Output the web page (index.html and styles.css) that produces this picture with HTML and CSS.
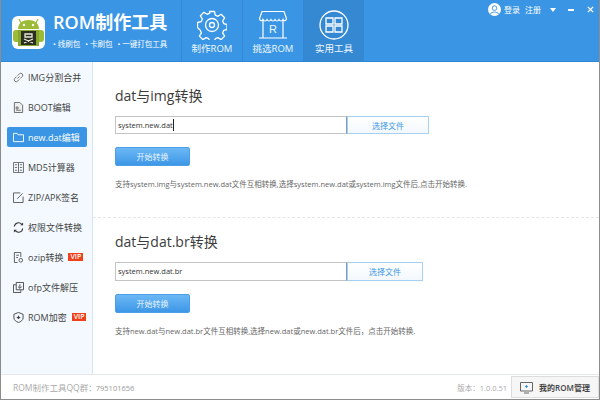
FILE: index.html
```html
<!DOCTYPE html>
<html lang="zh-CN">
<head>
    <meta charset="UTF-8">
    <title>ROM制作工具</title>
    <link rel="stylesheet" href="styles.css">
</head>
<body>
<div class="window">
    <header class="topbar">
        <div class="brand">
            <svg class="logo" viewBox="0 0 33 33">
                <rect width="33" height="33" rx="6" fill="#fff"/>
                <path d="M9 7 L7 3 M24 7 L26 3" stroke="#9cbc38" stroke-width="1.2"/>
                <path d="M6 13 C6 7 11 4 16.5 4 C22 4 27 7 27 13 Z" fill="#9cbc38"/>
                <circle cx="12" cy="9" r="1.2" fill="#fff"/>
                <circle cx="21" cy="9" r="1.2" fill="#fff"/>
                <rect x="1" y="14" width="31" height="12" rx="3" fill="#9cbc38"/>
                <rect x="6" y="14" width="21" height="16" fill="#86a82c"/>
                <rect x="9" y="15" width="15" height="14" fill="#2b2f22"/>
                <path d="M13 18h7v3h-7zM12 23l9 4M21 23l-9 4" stroke="#e8e8d8" stroke-width="1.3" fill="none"/>
            </svg>
            <div class="brand-text">
                <div class="brand-name">ROM制作工具</div>
                <div class="brand-tags"><span>线刷包</span><span>卡刷包</span><span>一键打包工具</span></div>
            </div>
        </div>
        <nav class="tabs">
            <div class="tab">
                <svg viewBox="0 0 30 30" class="tab-icon">
                    <path d="M12.5 1.5h5l.8 3.7 2.6 1.1 3.2-2 3.5 3.5-2 3.2 1.1 2.6 3.3.9v5l-3.3.8-1.1 2.600 2 3.200-3.500 3.500-3.200-2-2.600 1.100-.8 2.800h-5l-.8-2.800-2.600-1.100-3.200 2-3.500-3.500 2-3.200-1.100-2.600L.5 17.500v-5l3.800-.9 1.100-2.600-2-3.200 3.500-3.500 3.200 2 2.600-1.100z" fill="none" stroke="#fff" stroke-width="1.300" stroke-linejoin="round"/>
                    <circle cx="15" cy="15" r="6.500" fill="none" stroke="#fff" stroke-width="1.300"/>
                    <circle cx="15" cy="15" r="2.500" fill="none" stroke="#fff" stroke-width="1.300"/>
                </svg>
                <span>制作ROM</span>
            </div>
            <div class="tab">
                <svg viewBox="0 0 30 30" class="tab-icon">
                    <path d="M4 1.500h22l2.500 7c0 2.500-3 3-3.500 1-1 2-3 2-4 0-1 2-3 2-4 0-1 2-3 2-4 0-1 2-3 2-4 0-1 2-3 2-4 0-.5 2-3.500 1.500-3.500-1z" fill="none" stroke="#fff" stroke-width="1.200"/>
                    <path d="M5 11v17M25 11v17M1 28h28" stroke="#fff" stroke-width="1.200" fill="none"/>
                </svg>
                <b class="shop-r">R</b>
                <span>挑选ROM</span>
            </div>
            <div class="tab tab-active">
                <svg viewBox="0 0 30 30" class="tab-icon">
                    <circle cx="15" cy="15" r="14" fill="none" stroke="#fff" stroke-width="1.300"/>
                    <path d="M7 8h7v6H7zM16 8h7v6h-7zM7 16h7v6H7zM16 16h7v6h-7z" fill="none" stroke="#fff" stroke-width="1.300"/>
                </svg>
                <span>实用工具</span>
            </div>
        </nav>
        <div class="account">
            <svg class="avatar" viewBox="0 0 14 14">
                <circle cx="7" cy="7" r="7" fill="#fff"/>
                <circle cx="7" cy="5.500" r="2.500" fill="none" stroke="#3a96e4"/>
                <path d="M2.500 12c1-3 8-3 9 0" fill="none" stroke="#3a96e4"/>
            </svg>
            <span>登录</span>
            <span class="reg">注册</span>
            <i class="caret"></i>
            <i class="minimize"></i>
            <svg class="close" viewBox="0 0 8 8"><path d="M1 1l6 6M7 1l-6 6" stroke="#fff" stroke-width="1.600"/></svg>
        </div>
    </header>

    <div class="main">
        <aside class="sidebar">
            <div class="item">
                <svg viewBox="0 0 12 12"><path d="M5 7l2-2M4 5 2 7a2 2 0 0 0 3 3l2-2M8 7l2-2a2 2 0 0 0-3-3L5 4" fill="none" stroke="#666"/></svg>
                <span>IMG分割合并</span>
            </div>
            <div class="item">
                <svg viewBox="0 0 12 12"><path d="M1.500.5h6l3 3v8h-9z" fill="#eee" stroke="#666"/><path d="M3.500 5.500h2v2h-2zM3.500 9h5" fill="none" stroke="#666"/></svg>
                <span>BOOT编辑</span>
            </div>
            <div class="item item-active">
                <svg viewBox="0 0 12 12"><path d="M.5 10.500v-9h4l1 1.500h6v7.500z" fill="none" stroke="#fff"/></svg>
                <span>new.dat编辑</span>
            </div>
            <div class="item">
                <svg viewBox="0 0 12 12"><path d="M.5.500h11v11H.500zM6 .500v11" fill="none" stroke="#666"/><path d="M2 3h2.500M7.500 3H10M2 6h2.500M7.500 6H10M2 9h2.500M7.500 9H10" stroke="#666"/></svg>
                <span>MD5计算器</span>
            </div>
            <div class="item">
                <svg viewBox="0 0 12 12"><path d="M8 1H.500v10.500h10.500V5M4.500 7.500 10.500 1.500" fill="none" stroke="#555"/></svg>
                <span>ZIP/APK签名</span>
            </div>
            <div class="item">
                <svg viewBox="0 0 12 12"><path d="M1.500 5A4.500 4.500 0 0 1 9.500 2.500M10.500 7A4.500 4.500 0 0 1 2.500 9.500" fill="none" stroke="#333" stroke-width="1.200"/><path d="M8 3.500h3v-3zM4 8.500H1v3z" fill="#333"/></svg>
                <span>权限文件转换</span>
            </div>
            <div class="item">
                <svg viewBox="0 0 12 12"><path d="M5 11.500H1.500v-11h7v5M3.500 3.500h3M3.500 6h2" fill="none" stroke="#555"/><circle cx="8.500" cy="9" r="2" fill="none" stroke="#555"/></svg>
                <span>ozip转换</span>
                <em class="vip">VIP</em>
            </div>
            <div class="item">
                <svg viewBox="0 0 12 12"><path d="M3 3H.500v8.500h8V9M3.500.500h8v8h-8z" fill="none" stroke="#444"/><path d="M7.500 2.500v4M5.500 5l2 2 2-2" fill="none" stroke="#444"/></svg>
                <span>ofp文件解压</span>
            </div>
            <div class="item">
                <svg viewBox="0 0 12 12"><path d="M6 .500l5 2v4c0 2.500-2.500 4-5 5-2.500-1-5-2.500-5-5v-4z" fill="none" stroke="#444"/><path d="M6 3.500 7 5.500H8.500L6 8 3.500 5.500H5z" fill="#444"/></svg>
                <span>ROM加密</span>
                <em class="vip">VIP</em>
            </div>
        </aside>

        <section class="content">
            <div class="panel panel-first">
                <h2>dat与img转换</h2>
                <div class="file-row">
                    <div class="file-input">system.new.dat<i class="cursor"></i></div>
                    <button class="pick">选择文件</button>
                </div>
                <button class="start">开始转换</button>
                <p class="desc">支持system.img与system.new.dat文件互相转换,选择system.new.dat或system.img文件后,点击开始转换.</p>
            </div>
            <div class="panel panel-second">
                <h2>dat与dat.br转换</h2>
                <div class="file-row">
                    <div class="file-input">system.new.dat.br</div>
                    <button class="pick pick-narrow">选择文件</button>
                </div>
                <button class="start">开始转换</button>
                <p class="desc">支持new.dat与new.dat.br文件互相转换,选择new.dat或new.dat.br文件后，点击开始转换.</p>
            </div>
        </section>
    </div>

    <footer class="statusbar">
        <div class="qq"><span class="qq-label">ROM制作工具QQ群：</span><span class="qq-num">795101656</span></div>
        <div class="status-right">
            <span class="version">版本：1.0.0.51</span>
            <button class="my-rom">
                <svg viewBox="0 0 13 13"><path d="M.500 1.500h12v8.500H.500zM4 12h5" fill="none" stroke="#666"/><path d="M6.500 4v3M5 5.500h3" stroke="#3a96e4"/></svg>
                我的ROM管理
            </button>
        </div>
    </footer>
</div>
</body>
</html>
```

FILE: styles.css
```css
* {
    box-sizing: border-box;
}

body {
    margin: 0;
    font-family: "Open Sans", "Noto Sans CJK SC", sans-serif;
    color: #444;
}

.window {
    width: 600px;
    height: 400px;
    display: flex;
    flex-direction: column;
    border: 1px solid #8c8c8c;
    border-top: none;
    overflow: hidden;
}

/* top bar */
.topbar {
    height: 62px;
    flex: none;
    background: #3a96e4;
    border-bottom: 1px solid #2f86d2;
    color: #fff;
    display: flex;
}

.brand {
    width: 180px;
    display: flex;
    align-items: center;
    gap: 8px;
    padding: 4px 0 0 11px;
}

.logo {
    width: 33px;
    height: 33px;
}

.brand-text {
    margin-bottom: 4px;
}

.brand-name {
    font-size: 18px;
    font-weight: 600;
    line-height: 22px;
    white-space: nowrap;
}

.brand-tags {
    display: flex;
    gap: 5px;
    font-size: 7.500px;
    line-height: 14px;
    margin-top: 4px;
    white-space: nowrap;
}

.brand-tags span::before {
    content: "• ";
}

.tabs {
    display: flex;
}

.tab {
    position: relative;
    width: 61px;
    height: 61px;
    border-left: 1px solid #3388d4;
    display: flex;
    flex-direction: column;
    align-items: center;
    padding-top: 10px;
    font-size: 9.500px;
    color: #eef6fd;
}

.tab span {
    margin-top: 2px;
    line-height: 14px;
    white-space: nowrap;
}

.tab-icon {
    width: 30px;
    height: 30px;
}

.tab-active {
    background: #3589d3;
    width: 61px;
}

.shop-r {
    position: absolute;
    top: 23px;
    left: 26px;
    font-family: "Liberation Sans", sans-serif;
    font-weight: normal;
    font-size: 11px;
    line-height: 12px;
}

.account {
    flex: 1;
    display: flex;
    align-items: center;
    align-self: flex-start;
    height: 19px;
    padding-left: 124px;
    font-size: 8px;
}

.avatar {
    width: 13px;
    height: 13px;
    margin-right: 3px;
}

.reg {
    margin-left: 5px;
}

.caret {
    width: 0;
    height: 0;
    margin-left: 9px;
    border: 3.5px solid transparent;
    border-top: 4px solid #fff;
    border-bottom: none;
}

.minimize {
    width: 6px;
    height: 2px;
    background: #fff;
    margin-left: 12px;
}

.close {
    width: 7px;
    height: 7px;
    margin-left: 13px;
}

/* body */
.main {
    flex: 1;
    display: flex;
    min-height: 0;
}

.sidebar {
    width: 92px;
    flex: none;
    background: #f3f9fe;
    border-right: 1px solid #d4e6f5;
    padding-top: 5px;
}

.item {
    height: 20px;
    margin: 0 5px 10px 6px;
    padding-left: 6px;
    display: flex;
    align-items: center;
    gap: 4px;
    font-size: 9px;
    color: #444;
    white-space: nowrap;
    border-radius: 2px;
}

.item svg {
    width: 11px;
    height: 11px;
    flex: none;
}

.item-active {
    background: #3a96e4;
    color: #fff;
}

.vip {
    margin-left: 1px;
    padding: 0 2px;
    background: #f0401a;
    color: #fff;
    font-style: normal;
    font-size: 7px;
    font-weight: 600;
    line-height: 8px;
}

.content {
    flex: 1;
    background: #fff;
}

.panel {
    padding-left: 22px;
}

.panel-first {
    height: 156px;
    border-bottom: 1px dashed #e6e6e6;
    padding-top: 23px;
}

.panel-second {
    padding-top: 13px;
}

h2 {
    margin: 0;
    font-size: 14px;
    font-weight: normal;
    line-height: 21px;
    color: #3c3c3c;
}

.file-row {
    display: flex;
    margin-top: 10px;
    height: 19px;
}

.panel-first .file-row {
    height: 18px;
}

.file-input {
    width: 232px;
    border: 1px solid #c4c4c4;
    border-right-color: #7f9db9;
    font-size: 7.500px;
    line-height: 17px;
    padding-left: 2px;
    color: #333;
    background: #fff;
    display: flex;
    align-items: center;
}

.cursor {
    width: 1px;
    height: 12px;
    background: #222;
}

.pick {
    width: 82px;
    padding: 0;
    border: 1px solid #a6d0f2;
    background: linear-gradient(#fff, #f3f8fd);
    color: #3a96e4;
    font: inherit;
    font-size: 8px;
}

.pick-narrow {
    width: 76px;
}

.start {
    display: block;
    width: 75px;
    height: 19px;
    margin-top: 13px;
    padding: 0;
    border: 1px solid #4a9fe8;
    border-radius: 2px;
    background: linear-gradient(#6cb8f5, #3d97e6);
    color: #e8f4fd;
    font: inherit;
    font-size: 8px;
}

.desc {
    margin: 11px 0 0;
    font-size: 7.500px;
    line-height: 14px;
    color: #666;
    white-space: nowrap;
}

/* status bar */
.statusbar {
    height: 25px;
    flex: none;
    border-top: 1px solid #e6e9ec;
    background: #fff;
    display: flex;
    align-items: center;
    justify-content: space-between;
    padding-left: 12px;
    font-size: 7.500px;
    color: #aaa;
}

.qq-label {
    font-size: 8.500px;
}

.qq-num {
    margin-left: -1px;
    color: #999;
}

.status-right {
    display: flex;
    align-items: center;
    gap: 4px;
}

.version {
    font-size: 7.500px;
}

.my-rom {
    width: 88px;
    height: 22px;
    padding: 0;
    display: flex;
    align-items: center;
    justify-content: center;
    gap: 6px;
    border: 1px solid #ddd;
    background: #f6f6f6;
    color: #444;
    font: inherit;
    font-size: 8px;
    font-weight: 600;
}

.my-rom svg {
    width: 13px;
    height: 13px;
}
```
